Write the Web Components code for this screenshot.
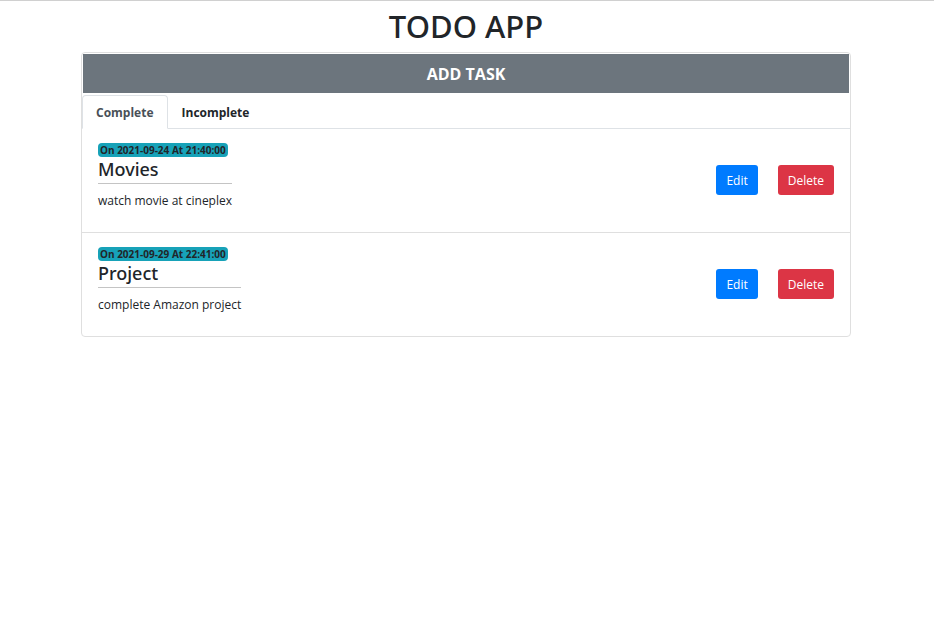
<!DOCTYPE html>
<html lang="en">
<head>
<meta charset="utf-8">
<title>TODO APP</title>
<style>
body { margin: 0; background: #fff; color: #212529; font: 13px/20px "Open Sans", "Noto Sans", sans-serif; }
</style>
</head>
<body>
<todo-app>
  <todo-tabs slot="tabs"></todo-tabs>
  <todo-item><span slot="when">On 2021-09-24 At 21:40:00</span><span slot="name">Movies</span><span slot="note">watch movie at cineplex</span></todo-item>
  <todo-item><span slot="when">On 2021-09-29 At 22:41:00</span><span slot="name">Project</span><span slot="note">complete Amazon project</span></todo-item>
</todo-app>

<template id="app">
<style>
:host { display: block; border-top: 1px solid #d0d0d0; padding: 0 83px 0 81px; }
h1 { margin: 0; font: 500 31px/51px "Noto Sans", sans-serif; text-align: center; }
main { border: 1px solid #dfdfdf; border-radius: 4px; }
.add { display: block; width: calc(100% - 2px); margin: 1px 1px 2px; padding: 9px 8px 7px; border: 0; background: #6c757d; color: #fff; font: 700 16px/23px "Open Sans", "Noto Sans", sans-serif; }
</style>
<h1>TODO APP</h1>
<main>
  <button class="add" type="button">ADD TASK</button>
  <slot name="tabs"></slot>
  <slot></slot>
</main>
</template>

<template id="tabs">
<style>
:host { display: block; border-bottom: 1px solid #dee2e6; }
nav { display: flex; margin-bottom: -1px; }
button { padding: 7px 13px 5px; border: 1px solid transparent; border-radius: 4px 4px 0 0; background: none; color: #212529; font: 700 12px/20px "Open Sans", "Noto Sans", sans-serif; }
button[aria-selected="true"] { background: #fff; border-color: #dee2e6 #dee2e6 #fff; color: #495057; }
</style>
<nav role="tablist">
  <button type="button" role="tab" aria-selected="true">Complete</button>
  <button type="button" role="tab" aria-selected="false">Incomplete</button>
</nav>
</template>

<template id="item">
<style>
:host { display: flex; align-items: center; justify-content: space-between; padding: 14px 16px 15px; }
:host(:not(:last-of-type)) { border-bottom: 1px solid #dfdfdf; }
.badge { display: block; width: fit-content; padding: 0 2px; border-radius: 4px; background: #17a2b8; font-size: 10px; line-height: 14px; font-weight: 700; }
h2 { margin: 0; border-bottom: 1px solid #c4c4c4; font: 500 18px/24px "Noto Sans", sans-serif; padding-bottom: 2px; }
p { margin: 0; font-size: 12px; line-height: 33px; }
.actions { display: flex; gap: 20px; }
button { padding: 6px 10px 4px; border: 0; border-radius: 3px; color: #fff; font: 400 12px/20px "Open Sans", "Noto Sans", sans-serif; }
.edit { background: #007bff; }
.delete { background: #dc3545; }
</style>
<div>
  <span class="badge"><slot name="when"></slot></span>
  <h2><slot name="name"></slot></h2>
  <p><slot name="note"></slot></p>
</div>
<div class="actions">
  <button class="edit" type="button">Edit</button>
  <button class="delete" type="button">Delete</button>
</div>
</template>

<script>
function define(name, templateId) {
  customElements.define(name, class extends HTMLElement {
    constructor() {
      super();
      this.attachShadow({ mode: "open" })
        .append(document.getElementById(templateId).content.cloneNode(true));
    }
  });
}
define("todo-app", "app");
define("todo-tabs", "tabs");
define("todo-item", "item");
</script>
</body>
</html>
